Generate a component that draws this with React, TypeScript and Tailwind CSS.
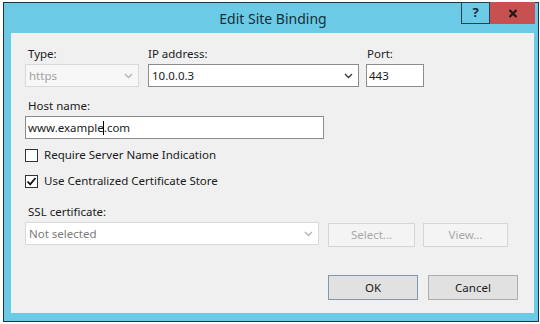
const Chevron = ({ disabled }: { disabled?: boolean }) => (
  <svg width="9" height="6" viewBox="0 0 9 6" className="shrink-0">
    <polyline
      points="1,1 4.5,4.5 8,1"
      fill="none"
      stroke={disabled ? "#b4b4b4" : "#3a3a3a"}
      strokeWidth="1.4"
    />
  </svg>
);

const Check = ({ checked, label }: { checked?: boolean; label: string }) => (
  <div className="flex h-[16px] items-center">
    <div className="flex h-[13px] w-[13px] items-center justify-center border border-[#333] bg-white">
      {checked && (
        <svg width="11" height="11" viewBox="0 0 11 11">
          <path d="M1.5 5.5 L4.2 8.3 L9.5 2" fill="none" stroke="#111" strokeWidth="1.8" />
        </svg>
      )}
    </div>
    <span className="ml-[6px]">{label}</span>
  </div>
);

const App = () => {
  return (
    <div className="relative h-[324px] w-[540px] overflow-hidden bg-white pl-[3px] pt-[2px] font-['Segoe_UI','Noto_Sans',sans-serif]">
      <div className="flex h-[320px] w-[536px] flex-col border border-[#22333b] bg-[#6bcbe6]">
        {/* title bar */}
        <div className="relative flex h-[30px] items-center justify-center">
          <span className="pl-[4px] text-[14px] text-[#182e38]">Edit Site Binding</span>
          <div className="absolute right-[3px] top-[-1px] flex">
            <div className="flex h-[22px] w-[29px] items-center justify-center border border-[#2c3f48] bg-[#6bcbe6] text-[13px] font-bold text-[#1a2a30]">
              ?
            </div>
            <div className="flex h-[22px] w-[45px] items-center justify-center bg-[#c75050]">
              <svg width="10" height="9" viewBox="0 0 10 9">
                <path d="M1.5 1 L8.5 8 M8.5 1 L1.5 8" stroke="#1a1a1a" strokeWidth="2.2" />
              </svg>
            </div>
          </div>
        </div>

        {/* body */}
        <div className="mb-[8px] ml-[7px] mr-[4px] flex-1 bg-[#f0f0f0] pl-[14px] pt-[13px] text-[11.5px] leading-[16px] text-[#1a1a1a]">
          <div className="flex">
            <div className="w-[114px]">
              <div className="pl-[3px]">Type:</div>
              <div className="mt-[2px] flex h-[23px] items-center justify-between border border-[#d9d9d9] bg-[#f7f7f7] pl-[3px] pr-[5px] text-[#a0a0a0]">
                <span>https</span>
                <Chevron disabled />
              </div>
            </div>
            <div className="ml-[9px] w-[211px]">
              <div>IP address:</div>
              <div className="mt-[2px] flex h-[23px] items-center justify-between border border-[#8c8c8c] bg-white pl-[3px] pr-[5px]">
                <span>10.0.0.3</span>
                <Chevron />
              </div>
            </div>
            <div className="ml-[7px] w-[58px]">
              <div className="pl-[1px]">Port:</div>
              <div className="mt-[2px] flex h-[23px] items-center border border-[#8c8c8c] bg-white pl-[2px]">443</div>
            </div>
          </div>

          <div className="mt-[11px] pl-[3px]">Host name:</div>
          <div className="mt-[2px] flex h-[23px] w-[299px] items-center border border-[#8c8c8c] bg-white pl-[2px]">
            <span>www.example</span>
            <span className="ml-[-1px] inline-block h-[14px] w-[1px] bg-black" />
            <span>.com</span>
          </div>

          <div className="mt-[8px]">
            <Check label="Require Server Name Indication" />
          </div>
          <div className="mt-[10px]">
            <Check checked label="Use Centralized Certificate Store" />
          </div>

          <div className="mt-[15px] pl-[3px]">SSL certificate:</div>
          <div className="mt-[2px] flex items-start">
            <div className="flex h-[23px] w-[294px] items-center justify-between border border-[#d9d9d9] bg-white pl-[3px] pr-[5px] text-[#7a7a7a]">
              <span>Not selected</span>
              <Chevron disabled />
            </div>
            <div className="ml-[9px] mt-[1px] flex h-[24px] w-[87px] items-center justify-center border border-[#d5d5d5] bg-[#f4f4f4] text-[#a8a8a8]">
              Select...
            </div>
            <div className="ml-[8px] mt-[1px] flex h-[24px] w-[85px] items-center justify-center border border-[#d5d5d5] bg-[#f4f4f4] text-[#a8a8a8]">
              View...
            </div>
          </div>

          <div className="mt-[28px] flex justify-end pr-[16px]">
            <div className="flex h-[25px] w-[90px] items-center justify-center border border-[#7f98ad] bg-[#e1e1e1]">OK</div>
            <div className="ml-[10px] flex h-[25px] w-[90px] items-center justify-center border border-[#adadad] bg-[#e1e1e1]">
              Cancel
            </div>
          </div>
        </div>
      </div>
    </div>
  );
};

export default App;
